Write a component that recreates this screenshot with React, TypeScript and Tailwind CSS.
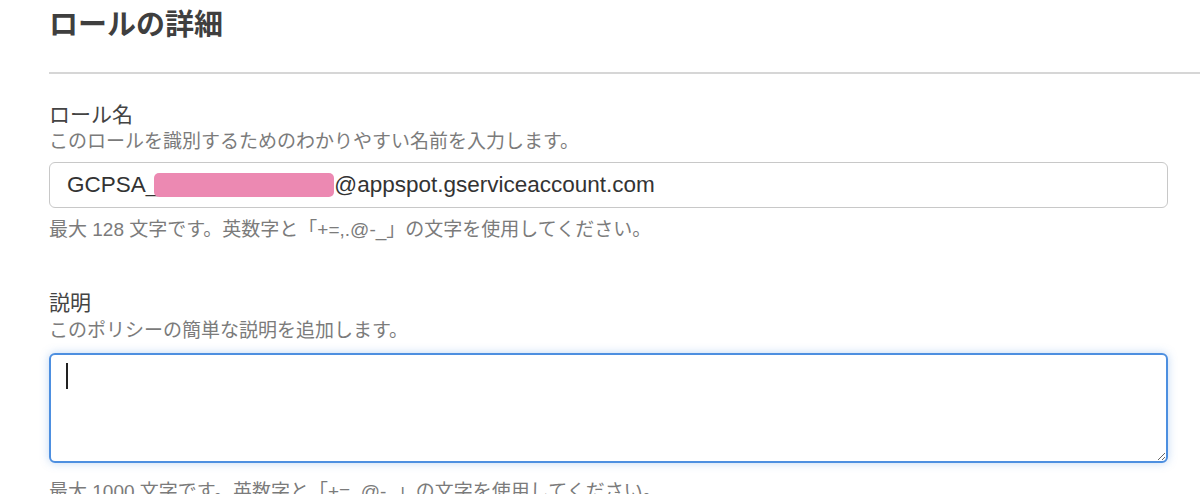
import React from "react";

const FONT = '"Liberation Sans", "Noto Sans CJK JP", sans-serif';

export default function App() {
  return (
    <div className="w-[1200px] h-[494px] overflow-hidden bg-white" style={{ fontFamily: FONT }}>
      <div className="pl-[49px]">
        <h1 className="h-[50px] leading-[50px] text-[29px] font-bold text-[#3f3f3f]">ロールの詳細</h1>
        <div className="mt-[22px] h-[2px] bg-[#d6d6d6]" />
      </div>
      <div className="pl-[49px] pr-[32px]">
        <div className="mt-[29px] h-[24px] leading-[24px] text-[21px] text-[#444]">ロール名</div>
        <div className="mt-[5px] h-[20px] leading-[20px] text-[19px] text-[#7b7b7b]">
          このロールを識別するためのわかりやすい名前を入力します。
        </div>
        <div className="mt-[10px] h-[46px] rounded-[6px] border border-[#c8c8c8] bg-white flex items-center pl-[17px] text-[22.5px] text-[#333]">
          <span>GCPSA_</span>
          <span className="inline-block w-[180px] h-[24px] rounded-[5px] bg-[#ec89b2] -ml-[4px]" />
          <span>@appspot.gserviceaccount.com</span>
        </div>
        <div className="mt-[12px] h-[20px] leading-[20px] text-[19px] text-[#7b7b7b]">
          最大 128 文字です。英数字と「+=,.@-_」の文字を使用してください。
        </div>
        <div className="mt-[51px] h-[24px] leading-[24px] text-[21px] text-[#444]">説明</div>
        <div className="mt-[6px] h-[20px] leading-[20px] text-[19px] text-[#7b7b7b]">
          このポリシーの簡単な説明を追加します。
        </div>
        <div className="relative mt-[12px] h-[110px]">
          <textarea
            readOnly
            className="block w-full h-[110px] rounded-[6px] border-2 border-[#4d8fe0] bg-white shadow-[0_0_10px_rgba(77,143,224,0.35)] outline-none resize"
            style={{ fontFamily: FONT }}
          />
          <span className="absolute left-[17px] top-[10px] w-[2px] h-[26px] bg-[#222]" />
        </div>
        <div className="mt-[19px] h-[20px] leading-[20px] text-[19px] text-[#7b7b7b]">
          最大 1000 文字です。英数字と「+=,.@-_」の文字を使用してください。
        </div>
      </div>
    </div>
  );
}
